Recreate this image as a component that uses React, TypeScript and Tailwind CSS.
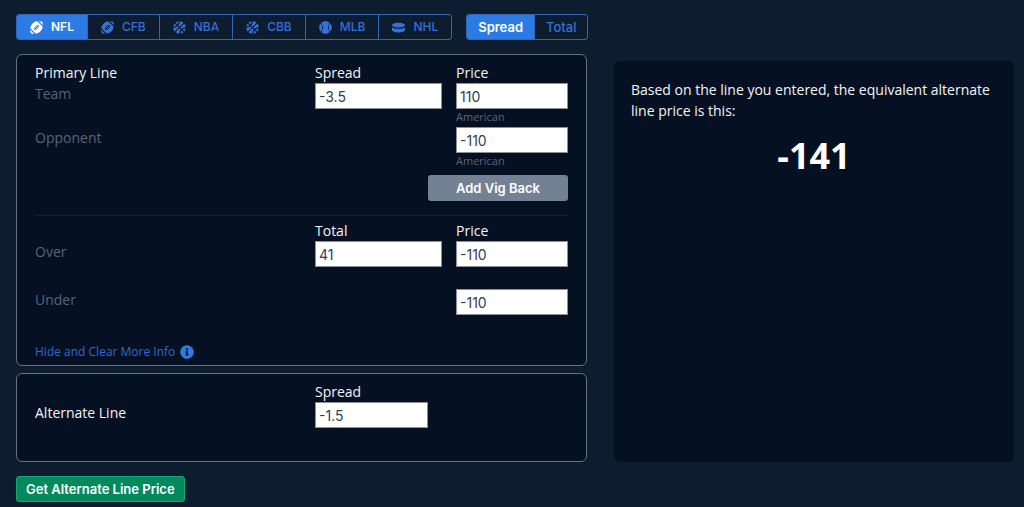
import { useState } from 'react';
import type { InputHTMLAttributes } from 'react';
import clsx from 'clsx';
import {
  FaBaseballBall,
  FaBasketballBall,
  FaFootballBall,
  FaHockeyPuck,
  FaInfoCircle,
} from 'react-icons/fa';

const LEAGUES = [
  { id: 'NFL', Icon: FaFootballBall },
  { id: 'CFB', Icon: FaFootballBall },
  { id: 'NBA', Icon: FaBasketballBall },
  { id: 'CBB', Icon: FaBasketballBall },
  { id: 'MLB', Icon: FaBaseballBall },
  { id: 'NHL', Icon: FaHockeyPuck },
];

const MARKETS = ['Spread', 'Total'];

const ROW = 'grid grid-cols-[minmax(0,1fr)_127px_112px] gap-x-[14px]';

const tabClass = (active: boolean) =>
  clsx(
    'flex items-center border-r border-[#2f66b8] font-[Inter,sans-serif] last:border-r-0',
    active ? 'bg-[#2c7be5] font-semibold text-white' : 'font-medium text-[#3670d8]'
  );

function LineInput(props: InputHTMLAttributes<HTMLInputElement>) {
  return (
    <input
      type="text"
      className="h-[26px] w-full border border-[#8a8f98] bg-white px-[3px] font-[Inter,sans-serif] text-[14px] text-[#344050] outline-none"
      {...props}
    />
  );
}

export default function App() {
  const [league, setLeague] = useState('NFL');
  const [market, setMarket] = useState('Spread');

  return (
    <div className="min-h-screen bg-[#0d1c2e] pt-[14px] pr-[10px] pb-1 pl-4 font-['Open_Sans',sans-serif] text-[14px] leading-5 text-[#f2f5f9]">
      <div className="flex gap-[14px]">
        <div className="flex h-[26px] overflow-hidden rounded-[3px] border border-[#2f66b8]">
          {LEAGUES.map(({ id, Icon }) => (
            <button
              key={id}
              onClick={() => setLeague(id)}
              className={clsx(tabClass(league === id), 'gap-2 px-[13px] text-[12px]')}
            >
              <Icon size={13} />
              {id}
            </button>
          ))}
        </div>
        <div className="flex h-[26px] overflow-hidden rounded-[3px] border border-[#2f66b8]">
          {MARKETS.map((name) => (
            <button
              key={name}
              onClick={() => setMarket(name)}
              className={clsx(tabClass(market === name), 'px-[11px] text-[13px]')}
            >
              {name}
            </button>
          ))}
        </div>
      </div>

      <div className="mt-[14px] grid grid-cols-[571fr_400fr] gap-x-[27px]">
        <div className="flex flex-col gap-[7px]">
          <section className="rounded-md border border-[#667182] bg-[#051122] px-[18px] pt-2 pb-[3px]">
            <div className={ROW}>
              <h2>Primary Line</h2>
              <label htmlFor="team-spread">Spread</label>
              <label htmlFor="team-price">Price</label>
            </div>
            <div className={ROW}>
              <span className="pt-px text-[#55647b]">Team</span>
              <LineInput id="team-spread" defaultValue="-3.5" />
              <div>
                <LineInput id="team-price" defaultValue="110" />
                <div className="h-[18px] text-[11px] leading-4 text-[#55647b]">American</div>
              </div>
            </div>
            <div className={ROW}>
              <label htmlFor="opponent-price" className="col-span-2 pt-px text-[#55647b]">
                Opponent
              </label>
              <div>
                <LineInput id="opponent-price" defaultValue="-110" />
                <div className="h-[18px] text-[11px] leading-4 text-[#55647b]">American</div>
              </div>
            </div>
            <div className="mt-1 flex justify-end">
              <button className="h-[26px] w-[140px] rounded-[3px] bg-[#748194] font-[Inter,sans-serif] text-[13px] font-semibold text-white">
                Add Vig Back
              </button>
            </div>

            <hr className="mt-[14px] mb-[5px] border-[#142132]" />

            <div className={ROW}>
              <label htmlFor="over-total" className="col-start-2">
                Total
              </label>
              <label htmlFor="over-price">Price</label>
            </div>
            <div className={ROW}>
              <span className="pt-px text-[#55647b]">Over</span>
              <LineInput id="over-total" defaultValue="41" />
              <LineInput id="over-price" defaultValue="-110" />
            </div>
            <div className={clsx(ROW, 'mt-[22px]')}>
              <label htmlFor="under-price" className="col-span-2 pt-px text-[#55647b]">
                Under
              </label>
              <LineInput id="under-price" defaultValue="-110" />
            </div>

            <div className="mt-[27px] flex items-center gap-[5px]">
              <a href="#more-info" className="text-[12px] text-[#3068d8]">
                Hide and Clear More Info
              </a>
              <FaInfoCircle size={14} className="text-[#2c7be5]" />
            </div>
          </section>

          <section className="rounded-md border border-[#667182] bg-[#051122] px-[18px] pt-2 pb-[33px]">
            <div className="grid grid-cols-[minmax(0,1fr)_113px] gap-x-[14px] pr-[140px]">
              <h2 className="row-span-2 self-center pt-4">Alternate Line</h2>
              <label htmlFor="alternate-spread">Spread</label>
              <LineInput id="alternate-spread" defaultValue="-1.5" />
            </div>
          </section>
        </div>

        <aside className="mt-[7px] rounded-md bg-[#051122] px-[17px] pt-[18px]">
          <p className="leading-[21px]">
            Based on the line you entered, the equivalent alternate line price is this:
          </p>
          <p className="mt-3 text-center text-[36px] leading-[46px] font-bold text-white">-141</p>
        </aside>
      </div>

      <button className="mt-[14px] h-[26px] rounded-[3px] border border-[#12a871] bg-[#028a5c] px-[9px] font-[Inter,sans-serif] text-[13px] leading-4 font-semibold text-white">
        Get Alternate Line Price
      </button>
    </div>
  );
}
